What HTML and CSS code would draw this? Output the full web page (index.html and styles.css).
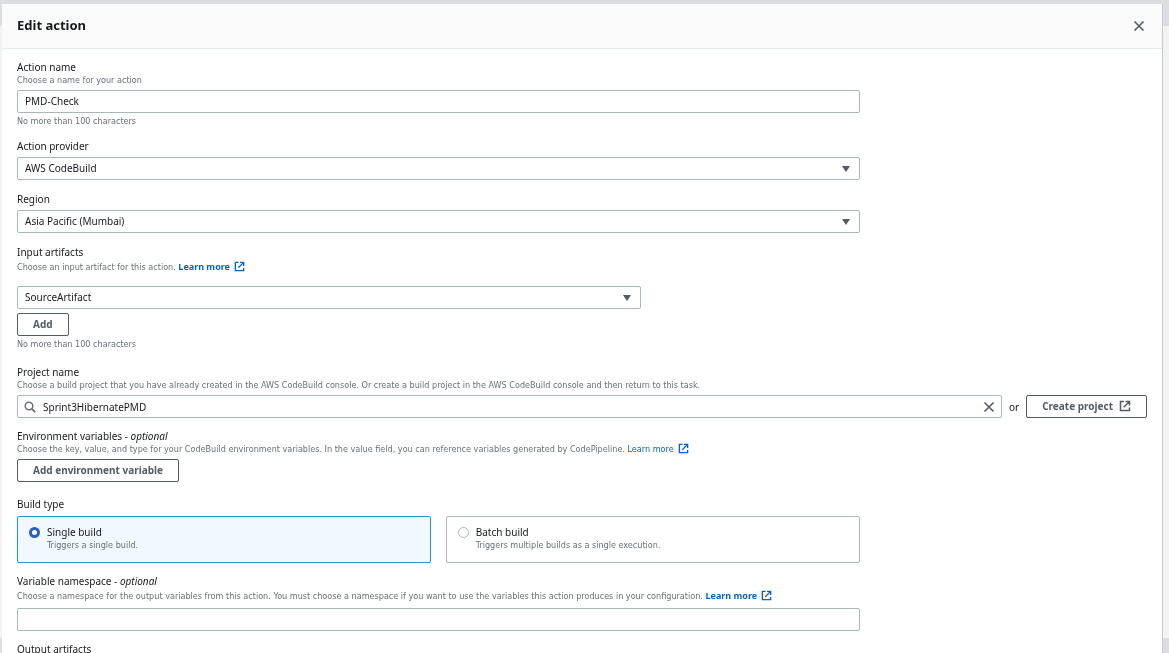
FILE: index.html
```
<!DOCTYPE html>
<html lang="en">
<head>
<meta charset="utf-8">
<title>Edit action</title>
<link rel="stylesheet" href="styles.css">
</head>
<body>
<svg class="symbols" aria-hidden="true">
  <symbol id="external" viewBox="0 0 12 12"><path d="M5 1.5H1.5v9h9V7.5M6.5 1.5h4V5.5M10.5 1.5L4.7 7.3" fill="none" stroke="currentColor" stroke-width="1.5"/></symbol>
  <symbol id="close" viewBox="0 0 12 12"><path d="M1.5 1.5l9 9M10.5 1.5l-9 9" fill="none" stroke="currentColor" stroke-width="1.6"/></symbol>
  <symbol id="caret" viewBox="0 0 8 6"><path d="M0 0h8L4 6z" fill="currentColor"/></symbol>
  <symbol id="search" viewBox="0 0 12 12"><circle cx="5" cy="5" r="3.8" fill="none" stroke="currentColor" stroke-width="1.5"/><path d="M7.8 7.8l3.4 3.4" stroke="currentColor" stroke-width="1.8"/></symbol>
</svg>
<div class="backdrop"><div class="backdrop-bar"></div><div class="backdrop-page"></div><div class="backdrop-foot"></div></div>
<main class="modal" role="dialog" aria-labelledby="title">
  <header class="modal-header">
    <h1 class="title" id="title">Edit action</h1>
    <button class="icon-button" type="button" aria-label="Close"><svg class="icon"><use href="#close"/></svg></button>
  </header>
  <form class="form">
    <div class="field narrow">
      <label class="label" for="name">Action name</label>
      <p class="hint">Choose a name for your action</p>
      <input class="control" id="name" type="text" value="PMD-Check">
      <p class="hint below">No more than 100 characters</p>
    </div>
    <div class="field select-field narrow">
      <label class="label spaced" for="provider">Action provider</label>
      <div class="select"><select class="control" id="provider"><option>AWS CodeBuild</option></select><svg class="caret"><use href="#caret"/></svg></div>
    </div>
    <div class="field select-field narrow">
      <label class="label spaced" for="region">Region</label>
      <div class="select"><select class="control" id="region"><option>Asia Pacific (Mumbai)</option></select><svg class="caret"><use href="#caret"/></svg></div>
    </div>
    <div class="field artifacts-field narrow">
      <label class="label" for="artifact">Input artifacts</label>
      <p class="hint artifacts-hint">Choose an input artifact for this action. <a class="link strong" href="#">Learn more <svg class="icon-link"><use href="#external"/></svg></a></p>
      <div class="select artifact"><select class="control" id="artifact"><option>SourceArtifact</option></select><svg class="caret"><use href="#caret"/></svg></div>
      <button class="button" type="button">Add</button>
      <p class="hint below">No more than 100 characters</p>
    </div>
    <div class="field">
      <label class="label" for="project">Project name</label>
      <p class="hint">Choose a build project that you have already created in the AWS CodeBuild console. Or create a build project in the AWS CodeBuild console and then return to this task.</p>
      <div class="project-row">
        <div class="search">
          <svg class="icon search-icon"><use href="#search"/></svg>
          <input class="control search-input" id="project" type="text" value="Sprint3HibernatePMD">
          <button class="icon-button clear" type="button" aria-label="Clear"><svg class="icon"><use href="#close"/></svg></button>
        </div>
        <span class="or">or</span>
        <button class="button" type="button">Create project <svg class="icon"><use href="#external"/></svg></button>
      </div>
    </div>
    <div class="field variables-field">
      <h2 class="label">Environment variables - <em>optional</em></h2>
      <p class="hint">Choose the key, value, and type for your CodeBuild environment variables. In the value field, you can reference variables generated by CodePipeline. <a class="link" href="#">Learn more <svg class="icon-link"><use href="#external"/></svg></a></p>
      <button class="button" type="button">Add environment variable</button>
    </div>
    <fieldset class="field narrow">
      <legend class="label legend">Build type</legend>
      <div class="tiles">
        <label class="tile selected"><input class="radio" type="radio" name="build" checked><span class="tile-text"><span class="label">Single build</span><span class="hint">Triggers a single build.</span></span></label>
        <label class="tile"><input class="radio" type="radio" name="build"><span class="tile-text"><span class="label">Batch build</span><span class="hint">Triggers multiple builds as a single execution.</span></span></label>
      </div>
    </fieldset>
    <div class="field narrow">
      <label class="label" for="namespace">Variable namespace - <em>optional</em></label>
      <p class="hint namespace-hint">Choose a namespace for the output variables from this action. You must choose a namespace if you want to use the variables this action produces in your configuration. <a class="link strong" href="#">Learn more <svg class="icon-link"><use href="#external"/></svg></a></p>
      <input class="control" id="namespace" type="text">
    </div>
    <div class="field"><h2 class="label">Output artifacts</h2></div>
  </form>
</main>
</body>
</html>
```
FILE: styles.css
```
* { box-sizing: border-box; }
body {
  margin: 0;
  height: 100vh;
  overflow: hidden;
  display: grid;
  padding: 4px 7px 0 2px;
  background: #f2f3f3;
  color: #16191f;
  font-family: "Noto Sans", sans-serif;
  font-size: 10px;
  line-height: 14px;
}
.symbols { position: absolute; width: 0; height: 0; }
.backdrop { position: fixed; inset: 0; z-index: -1; display: flex; flex-direction: column; background: #f2f3f3; }
.backdrop-bar { height: 26px; background: #dcdde0; }
.backdrop-page { flex: 1; }
.backdrop-foot { height: 15px; background: #dcdde0; }
.modal { min-height: 0; overflow: hidden; background: #fff; box-shadow: 1px 0 0 #c8cccd; }
.modal-header {
  display: flex;
  align-items: center;
  justify-content: space-between;
  padding: 11px 15px;
  background: #fafafa;
  border-bottom: 1px solid #e3eaea;
}
.title { margin: 0; font-size: 13px; line-height: 20px; padding-bottom: 2px; font-weight: 700; }
.form { padding: 11px 15px; }
.field { margin: 0 0 11px; padding: 0; border: 0; min-width: 0; }
.narrow { width: calc(75% - 5px); }
.select-field { margin-bottom: 12px; }
.artifacts-field { margin-bottom: 14px; }
.variables-field { margin-bottom: 15px; }
.label { display: block; margin: 0; padding: 0; font-size: 10px; line-height: 14px; font-weight: 400; }
.spaced { margin-bottom: 4px; }
.legend { margin-bottom: 5px; }
.hint { display: block; margin: 0 0 3px; color: #687078; font-family: "DejaVu Sans Condensed", sans-serif; font-size: 9px; line-height: 13px; white-space: nowrap; }
.below { margin: 2px 0 0; }
.artifacts-hint { margin: 1px 0 12px; }
.namespace-hint { margin: 1px 0 5px; }
.control {
  display: block;
  width: 100%;
  height: 23px;
  padding: 0 7px 1px;
  border: 1px solid #aab7b8;
  border-radius: 2px;
  background: #fff;
  color: inherit;
  font: inherit;
  appearance: none;
}
.select { position: relative; }
.artifact { width: calc(75% - 8px); margin-bottom: 4px; }
.caret { position: absolute; right: 10px; top: 9px; width: 8px; height: 6px; color: #545b64; pointer-events: none; }
.icon { width: 12px; height: 12px; display: block; }
.icon-link { width: 11px; height: 11px; margin-left: 2px; vertical-align: -2px; }
.icon-button { padding: 2px; border: 0; background: none; color: #545b64; }
.button {
  display: inline-flex;
  align-items: center;
  gap: 6px;
  height: 23px;
  padding: 0 15px 1px;
  border: 1px solid #545b64;
  border-radius: 2px;
  background: #fff;
  color: #545b64;
  font: inherit;
  font-weight: 700;
  vertical-align: top;
  white-space: nowrap;
}
.project-row { display: flex; align-items: center; gap: 7px; }
.search { position: relative; flex: 1; }
.search-icon { position: absolute; left: 7px; top: 6px; color: #687078; }
.search-input { padding: 0 25px; }
.clear { position: absolute; right: 5px; top: 4px; }
.link { color: #0a63c2; text-decoration: none; }
.strong { font-family: "Noto Sans", sans-serif; font-weight: 700; }
.tiles { display: grid; grid-template-columns: 1fr 1fr; gap: 15px; }
.tile { display: flex; gap: 7px; height: 47px; padding: 8px 11px; border: 1px solid #aab7b8; border-radius: 2px; }
.selected { border-color: #1a9ac4; background: #f1f8ff; }
.radio { appearance: none; width: 11px; height: 11px; margin: 2px 0 0; border: 1px solid #aab7b8; border-radius: 50%; background: #fff; }
.radio:checked { border: 3px solid #2a5fc0; }
```
